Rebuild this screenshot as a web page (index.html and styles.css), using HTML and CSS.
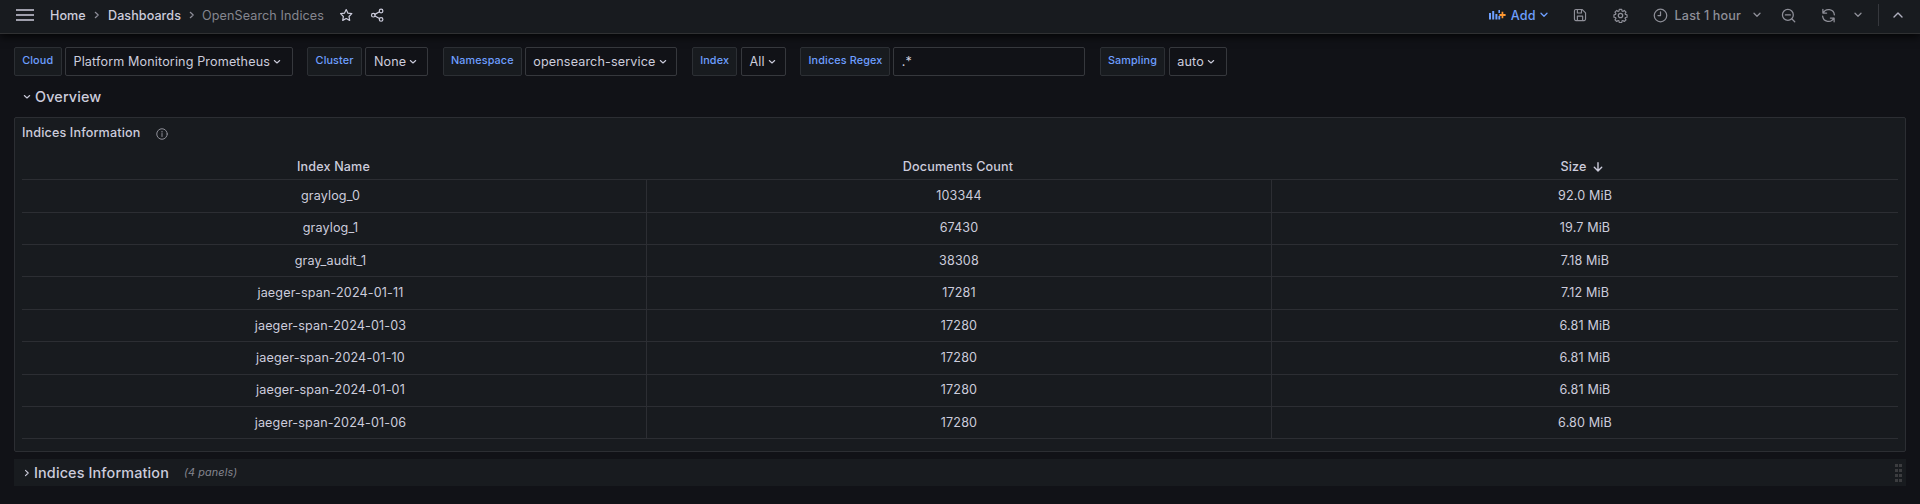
FILE: index.html
```
<!DOCTYPE html>
<html lang="en">
<head>
<meta charset="utf-8">
<title>OpenSearch Indices</title>
<link rel="stylesheet" href="styles.css">
</head>
<body>
<header class="topbar">
  <svg class="icon menu" viewBox="0 0 18 12"><path d="M0 1.1h18M0 5.9h18M0 10.9h18"/></svg>
  <nav class="crumbs">
    <span class="crumb home">Home</span>
    <svg class="icon sep" viewBox="0 0 6 8"><path d="M1.3 1.3 4.2 4 1.3 6.7"/></svg>
    <span class="crumb dashboards">Dashboards</span>
    <svg class="icon sep" viewBox="0 0 6 8"><path d="M1.3 1.3 4.2 4 1.3 6.7"/></svg>
    <span class="crumb current">OpenSearch Indices</span>
  </nav>
  <svg class="icon star" viewBox="0 0 24 24"><path d="m12 2.6 2.9 6 6.5.9-4.700 4.600 1.100 6.500L12 17.500l-5.800 3.100 1.100-6.500L2.600 9.500l6.500-.9z"/></svg>
  <svg class="icon share" viewBox="0 0 24 24"><circle cx="18.500" cy="5" r="3"/><circle cx="5.500" cy="12" r="3"/><circle cx="18.500" cy="19" r="3"/><path d="m8.200 10.600 7.600-4.200M8.200 13.400l7.600 4.200"/></svg>
  <div class="tools">
    <div class="add">
      <svg class="add-icon" viewBox="0 0 17 10"><path class="bars" d="M0 3h2v6.500H0zM3.200 1h2v8.500h-2zM6.400 4h2v5.500h-2zM9.400 6h1.800v3.500H9.400zM9.400 0h1.600v3H9.400z"/><path class="plus" d="M10.400 4h2.200V1.700h1.700V4h2.300v2h-2.300v2.300h-1.700V6h-2.200z"/></svg>
      <span>Add</span>
      <svg class="icon chev" viewBox="0 0 8 6"><path d="m1 1.300 3 3 3-3"/></svg>
    </div>
    <svg class="icon save" viewBox="0 0 24 24"><path d="M5 2.500h10.500l6 6V19a2.500 2.500 0 0 1-2.500 2.500H5A2.500 2.500 0 0 1 2.500 19V5A2.500 2.500 0 0 1 5 2.500zM7.500 3v5.500h7V3M7.500 21v-7h9v7"/></svg>
    <svg class="icon gear" viewBox="0 0 24 24"><circle cx="12" cy="12" r="3.500"/><path d="m9.900 1.800h4.200l.5 2.700 1.400.6 2.300-1.600 3 3-1.600 2.300.6 1.400 2.700.5v4.200l-2.700.5-.6 1.400 1.600 2.300-3 3-2.300-1.600-1.400.6-.5 2.700H9.900l-.5-2.700-1.400-.6-2.300 1.600-3-3 1.600-2.300-.6-1.400-2.700-.5v-4.200l2.700-.5.600-1.400-1.600-2.300 3-3L8 5.100l1.400-.6z" transform="translate(.6 .6) scale(.95)"/></svg>
    <svg class="icon clock" viewBox="0 0 24 24"><circle cx="12" cy="12" r="10"/><path d="M12 6v6H8"/></svg>
    <span class="range">Last 1 hour</span>
    <svg class="icon chev range-chev" viewBox="0 0 8 6"><path d="m1 1.300 3 3 3-3"/></svg>
    <svg class="icon zoom-out" viewBox="0 0 24 24"><circle cx="11" cy="11" r="8.700"/><path d="m17.500 17.500 4.500 4.500M7 11h8"/></svg>
    <svg class="icon refresh" viewBox="0 0 24 24"><path d="M3 2v6h6M21 22v-6h-6M3.500 8A9.400 9.400 0 0 1 21.400 11M20.500 16A9.400 9.400 0 0 1 2.600 13"/></svg>
    <svg class="icon chev refresh-chev" viewBox="0 0 8 6"><path d="m1 1.300 3 3 3-3"/></svg>
    <span class="divider"></span>
    <svg class="icon up" viewBox="0 0 10 6"><path d="m1 5 4-4 4 4"/></svg>
  </div>
</header>

<main class="content">
  <section class="variables">
    <div class="variable"><label class="name w-cloud">Cloud</label><div class="value w-cloud-v">Platform Monitoring Prometheus<svg class="icon caret" viewBox="0 0 8 6"><path d="m1.300 1.500 2.700 2.500 2.700-2.500"/></svg></div></div>
    <div class="variable"><label class="name w-cluster">Cluster</label><div class="value w-cluster-v">None<svg class="icon caret" viewBox="0 0 8 6"><path d="m1.300 1.500 2.700 2.500 2.700-2.500"/></svg></div></div>
    <div class="variable"><label class="name w-ns">Namespace</label><div class="value w-ns-v">opensearch-service<svg class="icon caret" viewBox="0 0 8 6"><path d="m1.300 1.500 2.700 2.500 2.700-2.500"/></svg></div></div>
    <div class="variable w-gap"><label class="name w-index">Index</label><div class="value w-index-v">All<svg class="icon caret" viewBox="0 0 8 6"><path d="m1.300 1.500 2.700 2.500 2.700-2.500"/></svg></div></div>
    <div class="variable"><label class="name w-regex">Indices Regex</label><div class="value w-regex-v">.*</div></div>
    <div class="variable"><label class="name w-sampling">Sampling</label><div class="value w-sampling-v">auto<svg class="icon caret" viewBox="0 0 8 6"><path d="m1.300 1.500 2.700 2.500 2.700-2.500"/></svg></div></div>
  </section>

  <h2 class="row-title open"><svg class="icon caret" viewBox="0 0 8 6"><path d="m1.300 1.500 2.700 2.500 2.700-2.500"/></svg><span>Overview</span></h2>

  <section class="panel">
    <div class="panel-head"><h3 class="panel-title">Indices Information</h3><svg class="icon info" viewBox="0 0 24 24"><circle cx="12" cy="12" r="10.500"/><path d="M12 11v6M12 6.700v1.600"/></svg></div>
    <div class="table">
      <div class="thead"><div class="th first">Index Name</div><div class="th">Documents Count</div><div class="th last">Size<svg class="icon sort" viewBox="0 0 10 10"><path d="M5 .8v8M1.300 5.300 5 8.900l3.700-3.600"/></svg></div></div>
      <div class="tr"><div class="td">graylog_0</div><div class="td">103344</div><div class="td">92.0 MiB</div></div>
      <div class="tr"><div class="td">graylog_1</div><div class="td">67430</div><div class="td">19.7 MiB</div></div>
      <div class="tr"><div class="td">gray_audit_1</div><div class="td">38308</div><div class="td">7.18 MiB</div></div>
      <div class="tr"><div class="td">jaeger-span-2024-01-11</div><div class="td">17281</div><div class="td">7.12 MiB</div></div>
      <div class="tr"><div class="td">jaeger-span-2024-01-03</div><div class="td">17280</div><div class="td">6.81 MiB</div></div>
      <div class="tr"><div class="td">jaeger-span-2024-01-10</div><div class="td">17280</div><div class="td">6.81 MiB</div></div>
      <div class="tr"><div class="td">jaeger-span-2024-01-01</div><div class="td">17280</div><div class="td">6.81 MiB</div></div>
      <div class="tr"><div class="td">jaeger-span-2024-01-06</div><div class="td">17280</div><div class="td">6.80 MiB</div></div>
    </div>
  </section>

  <section class="collapsed">
    <h2 class="row-title"><svg class="icon caret" viewBox="0 0 6 8"><path d="M1.500 1.300 4.200 4 1.500 6.700"/></svg><span>Indices Information</span></h2>
    <span class="count">(4 panels)</span>
    <span class="grip"><i></i><i></i><i></i><i></i><i></i><i></i><i></i><i></i></span>
  </section>
</main>
</body>
</html>
```
FILE: styles.css
```
* { box-sizing: border-box; }
body {
  margin: 0;
  height: 504px;
  overflow: hidden;
  background: #111217;
  color: #ccccdc;
  font-family: Inter, "Liberation Sans", sans-serif;
  font-size: 12.6px;
  letter-spacing: 0.135px;
}
h2, h3 { margin: 0; font-weight: 500; }
.icon { display: block; flex: none; fill: none; stroke: currentColor; stroke-width: 2; stroke-linejoin: round; stroke-linecap: round; }

.topbar {
  display: flex;
  align-items: center;
  height: 34px;
  padding: 0 17px 3px 16px;
  background: #181b1f;
  border-bottom: 1px solid #303133;
  box-shadow: 0 3px 8px rgba(0, 0, 0, 0.75);
}
.menu { width: 18px; height: 12px; stroke-width: 1.500; stroke-linecap: butt; }
.crumbs { display: flex; align-items: center; margin-left: 16px; font-weight: 500; letter-spacing: 0.05px; white-space: nowrap; }
.crumb.home { width: 35px; }
.crumb.dashboards { width: 72px; }
.crumb.current { width: 122px; color: #85868f; font-weight: 400; letter-spacing: 0.1px; }
.sep { width: 6px; height: 8px; margin: 0 8px 0 9px; color: #8e8e99; stroke-width: 1.200; }
.sep:nth-of-type(2) { margin-right: 7px; }
.star { width: 14.400px; height: 14.400px; margin-left: 15px; }
.share { width: 14.400px; height: 14.400px; margin-left: 17px; }
.tools { display: flex; align-items: center; margin-left: auto; color: #8e8f98; font-weight: 500; white-space: nowrap; }
.add { display: flex; align-items: center; color: #6e9fff; }
.add-icon { width: 17px; height: 10px; margin-right: 5px; }
.bars { fill: #6e9fff; }
.plus { fill: #ff9830; }
.chev { width: 8px; height: 6px; stroke-width: 1.300; }
.add .chev { margin-left: 4px; }
.save { width: 14px; height: 14px; margin-left: 25px; }
.gear { width: 15px; height: 15px; margin-left: 26px; }
.clock { width: 15px; height: 15px; margin-left: 25px; }
.range { margin-left: 7px; }
.range-chev { margin-left: 12px; }
.zoom-out { width: 15px; height: 15px; margin-left: 20px; }
.refresh { width: 15px; height: 15px; margin-left: 25px; }
.refresh-chev { margin-left: 18px; }
.divider { width: 1px; height: 22px; margin-left: 16px; background: #36383d; }
.up { width: 10px; height: 6px; margin-left: 14px; color: #b0b0bf; stroke-width: 1.400; }

.content { padding: 13px 14px 0; }
.variables { display: flex; gap: 14.400px; height: 29px; }
.variable { display: flex; justify-content: space-between; gap: 3px; white-space: nowrap; }
.w-gap { margin-left: 0.800px; }
.name, .value { display: flex; border: 1px solid #2c2f34; border-radius: 2px; height: 29px; }
.name { padding: 5.500px 0 0 7.200px; background: #181b1f; color: #6e9fff; font-size: 10.800px; font-weight: 500; line-height: 14px; }
.value { align-items: center; padding-left: 7.500px; border-color: #36383d; font-size: 12.600px; }
.caret { width: 8px; height: 6px; stroke-width: 1.100; }
.value .caret { margin-left: 3px; }
.w-cloud { width: 48px; }
.w-cloud-v { width: 228px; }
.w-cluster { width: 55px; }
.w-cluster-v { width: 63px; }
.w-ns { width: 79px; }
.w-ns-v { width: 152px; }
.w-index { width: 45px; }
.w-index-v { width: 45px; margin-left: 1px; }
.w-regex { width: 90px; }
.w-regex-v { width: 192px; }
.w-sampling { width: 65px; }
.w-sampling-v { width: 58px; margin-left: 1px; }

.row-title { display: flex; align-items: center; gap: 4px; font-size: 14.400px; white-space: nowrap; }
.row-title.open { height: 41px; padding: 0 0 0 9px; }

.panel { height: 335px; padding: 0 7px; background: #181b1f; border: 1px solid #2c2e33; border-radius: 2px; }
.panel-head { display: flex; align-items: center; height: 30px; }
.panel-title { width: 119px; padding-bottom: 2px; font-size: 12.600px; white-space: nowrap; }
.info { width: 12px; height: 12px; margin: 1px 0 0 15px; color: #8e8f98; stroke-width: 2; }
.table { width: 1876px; }
.thead, .tr { display: grid; grid-template-columns: 625px 625px 626px; }
.thead { height: 32.300px; border-bottom: 1px solid #2c2e33; font-weight: 500; }
.th { display: flex; align-items: center; justify-content: center; padding: 6px 3px 0 0; }
.th.first { padding: 6px 2px 0 0; }
.th.last { padding-right: 7px; }
.sort { width: 10px; height: 10px; margin-left: 6px; stroke-width: 1.400; }
.tr { height: 32.400px; border-bottom: 1px solid #2c2e33; }
.td { display: flex; align-items: center; justify-content: center; padding: 0 0 1px; border-right: 1px solid #2c2e33; }
.td:first-child { padding-right: 7px; }
.td:last-child { border-right: 0; }

.collapsed { display: flex; align-items: center; height: 27px; margin-top: 7px; padding: 0 4px 0 10px; background: #181b1f; }
.collapsed .caret { width: 6px; height: 8px; }
.count { margin-left: 15px; color: #85868f; font-size: 10.800px; font-style: italic; }
.grip { display: grid; grid-template-columns: 3px 3px; gap: 2px 1px; margin-left: auto; }
.grip i { width: 3px; height: 3px; background: #3b3c3f; }
```
